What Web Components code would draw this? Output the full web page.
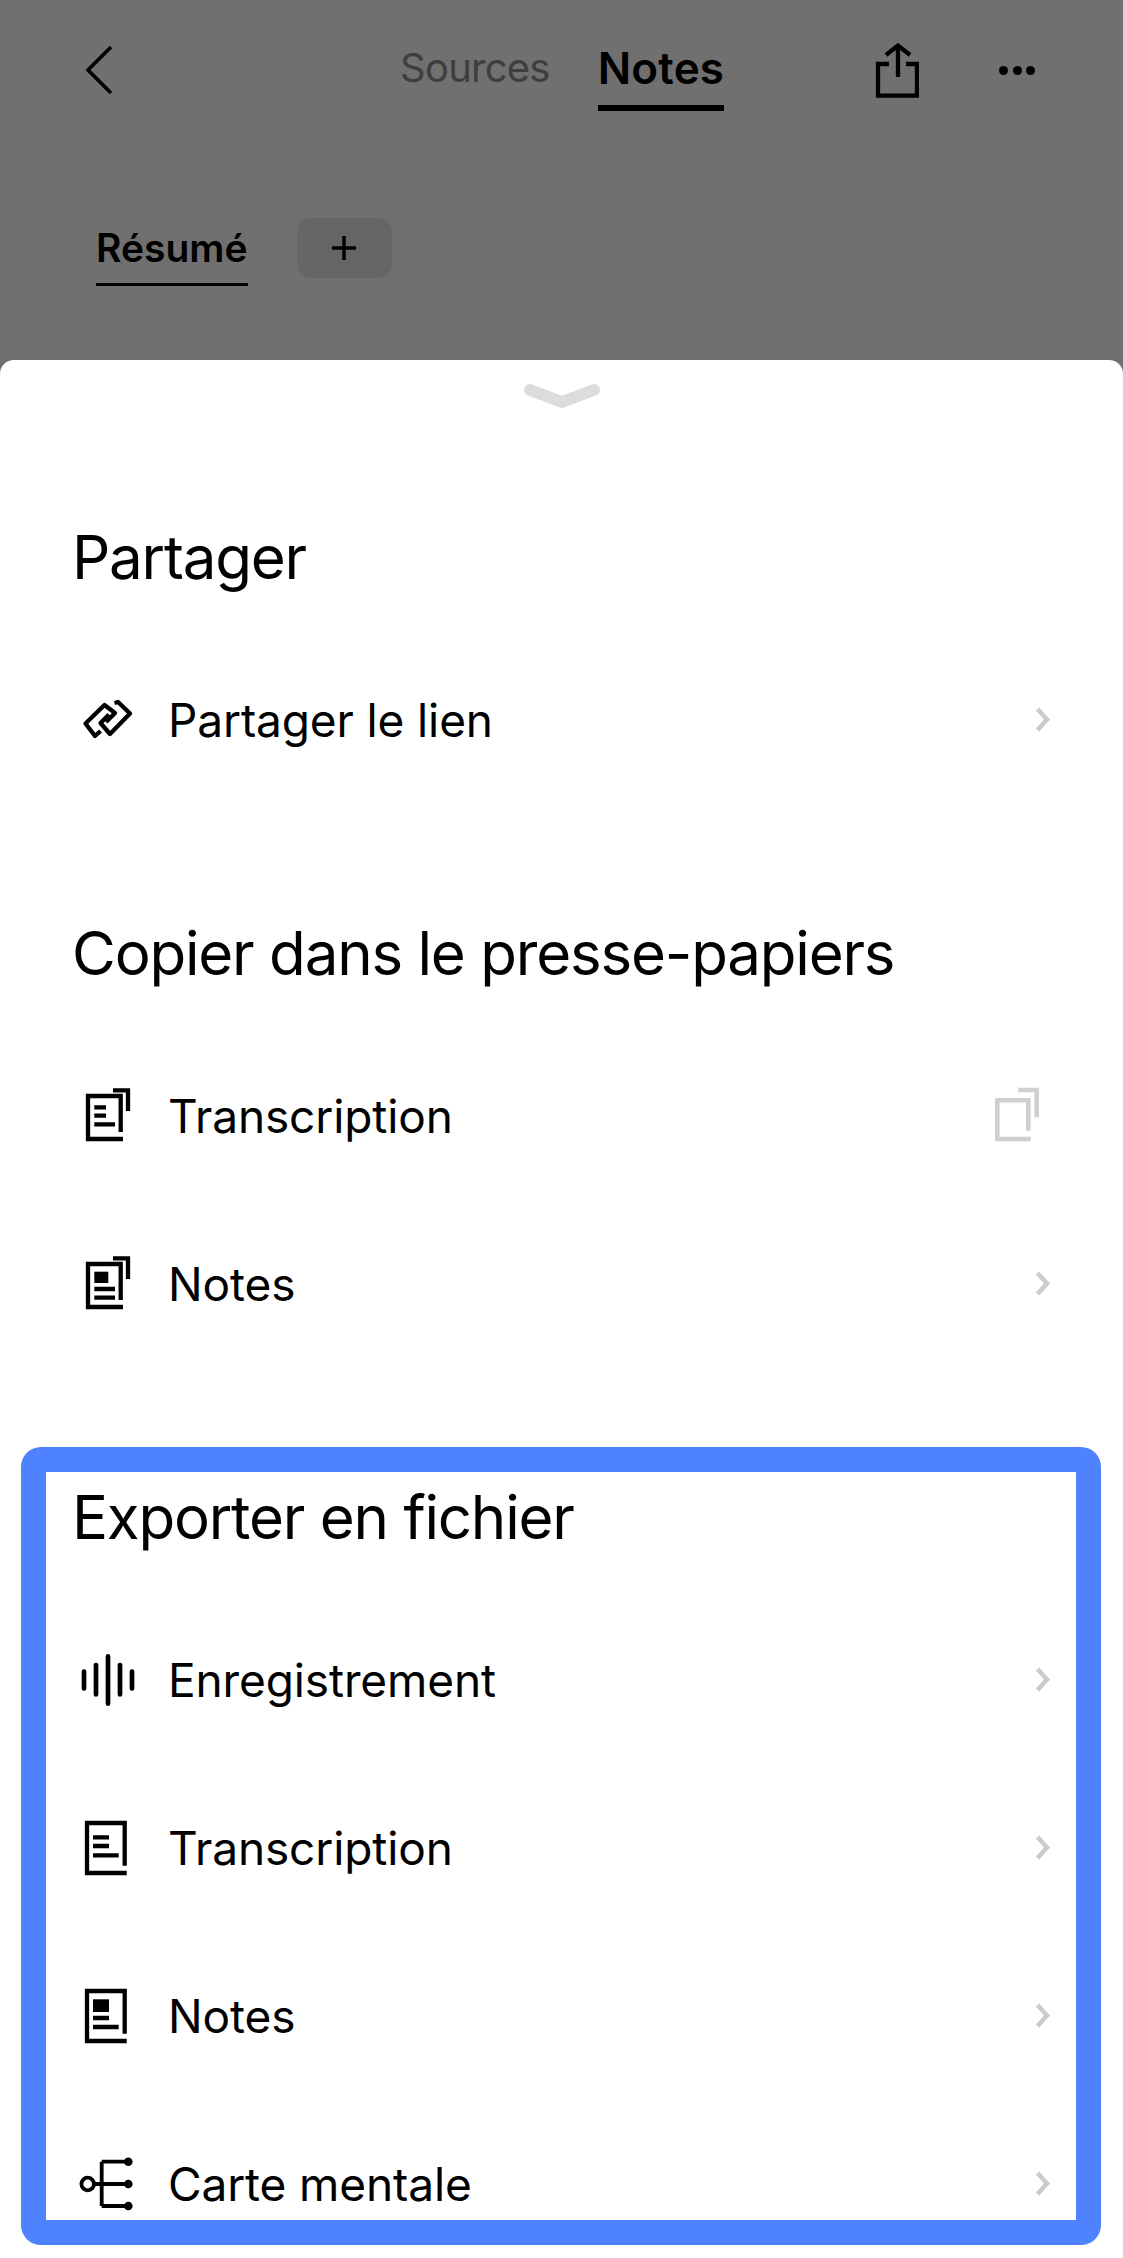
<!DOCTYPE html>
<html lang="fr">
<head>
<meta charset="utf-8">
<title>Partager</title>
<style>
  html, body { margin: 0; height: 2258px; overflow: hidden; background: #fff; }
  body { font-family: Inter, "Liberation Sans", sans-serif; color: #000; }
</style>
</head>
<body>
<notes-screen></notes-screen>

<script>
  const ICONS = {
    back: `<path d="M30 3 L7 26 L30 49" />`,
    share: `<path d="M15 21 H4 V52.600 H43 V21 H32 M24 34 V5 M12 12 L24 2.500 L36 12" />`,
    link: `<path d="M40.500 61 L35 66 L25.500 53.500 L44.500 35 L55 43 L46 52 M54.500 33 L58 32 L70 43.500 L50 64 L40.500 53 L49 44.500" />`,
    docCopy: `<path d="M60.700 66 V30 H28 V73 H63 M53 24.300 H68 V45" /><path d="M34.300 41.300 H46 M34.300 49.700 H46 M34.300 58.300 H55" />`,
    newsCopy: `<path d="M60.700 66 V30 H28 V73 H63 M53 24.300 H68 V45" /><path class="solid" d="M34.300 37.700 H48.300 V49 H34.300 Z" /><path d="M34.300 55 H55 M34.300 63.700 H55" />`,
    copy: `<path d="M75.300 64.700 V34.300 H44.300 V73 H77.700 M65.300 24 H83.700 V51.300" />`,
    wave: `<path class="round" d="M24 41.600 V58.400 M36 35 V64.400 M48 26.300 V73.700 M60 35 V64.400 M72 41.600 V58.400" />`,
    doc: `<path d="M64.700 67.700 V25 H27 V75 H66.700" /><path d="M33 39.300 H49 M33 48 H49 M33 57.300 H58.700" />`,
    news: `<path d="M64.700 67.700 V25 H27 V75 H66.700" /><path class="solid" d="M33 33.300 H49 V46 H33 Z" /><path d="M33 52 H49 M33 61 H58.700" />`,
    mindmap: `<circle cx="27.700" cy="50" r="6.300" /><path d="M34 50 H68 M41.700 27.700 H68 M41.700 72 H68 M41.700 27.700 V72" /><circle class="solid" cx="68.300" cy="27.700" r="4.300" /><circle class="solid" cx="68.300" cy="50" r="4.300" /><circle class="solid" cx="68.300" cy="72" r="4.300" />`
  };

  const VIEW_BOXES = { back: '0 0 36 52', share: '0 0 45 56' };

  class AppIcon extends HTMLElement {
    constructor() {
      super();
      this.attachShadow({ mode: 'open' });
      const name = this.getAttribute('name');
      const size = this.getAttribute('size') || '100 100';
      const [w, h] = size.split(' ');
      this.shadowRoot.innerHTML = `
        <style>
          :host { display: block; width: ${w}px; height: ${h}px; flex: none; color: #000; }
          svg { display: block; width: 100%; height: 100%; fill: none; stroke: currentColor; stroke-width: var(--sw, 4.300); stroke-linejoin: var(--join, miter); }
          .round { stroke-width: 4.700; stroke-linecap: round; }
          .solid { fill: currentColor; stroke: none; }
        </style>
        <svg viewBox="${VIEW_BOXES[name] || '0 0 100 100'}">${ICONS[name]}</svg>
      `;
    }
  }

  class TopBar extends HTMLElement {
    constructor() {
      super();
      this.attachShadow({ mode: 'open' });
      this.shadowRoot.innerHTML = `
        <style>
          :host { display: block; height: 360px; background: #707070; }
          .nav { display: flex; align-items: flex-start; padding: 44px 0 0 81px; height: 67px; }
          .tabs { display: flex; gap: 48px; margin-left: 283px; }
          .tab { font-size: 40px; letter-spacing: -0.75px; line-height: 48px; height: 67px; color: #3e3e3e; }
          .tab.active { font-size: 44px; letter-spacing: 0.2px; font-weight: 600; color: #000; box-shadow: inset 0 -6px 0 #000; }
          .share { margin-left: 150px; margin-top: -1px; --sw: 4.300; }
          .more { display: flex; gap: 4.500px; margin-left: 80px; padding-top: 22px; }
          .more i { width: 9px; height: 9px; border-radius: 50%; background: #000; }
          .sub { display: flex; align-items: flex-start; padding: 107px 0 0 96px; }
          .sub-tab { font-size: 39px; font-weight: 600; line-height: 60px; height: 65px; border-bottom: 3px solid #000; }
          .add { display: flex; align-items: center; justify-content: center; width: 95px; height: 60px; margin-left: 49px; border-radius: 14px; background: #666; }
          .add svg { width: 26px; height: 26px; stroke: #000; stroke-width: 3.500; }
        </style>
        <div class="nav">
          <app-icon name="back" size="36 52" style="--sw:3.600"></app-icon>
          <div class="tabs">
            <div class="tab">Sources</div>
            <div class="tab active">Notes</div>
          </div>
          <app-icon class="share" name="share" size="45 56"></app-icon>
          <div class="more"><i></i><i></i><i></i></div>
        </div>
        <div class="sub">
          <div class="sub-tab">Résumé</div>
          <div class="add"><svg viewBox="0 0 26 26"><path d="M13 1 V25 M1 13 H25" /></svg></div>
        </div>
      `;
    }
  }

  class SheetSection extends HTMLElement {
    constructor() {
      super();
      this.attachShadow({ mode: 'open' });
      this.shadowRoot.innerHTML = `
        <style>
          :host { display: block; margin-bottom: 70px; }
          h2 { margin: 0; height: 158px; display: flex; align-items: center; padding-left: 72px;
               font-size: 60px; font-weight: 400; letter-spacing: -1.2px; }
        </style>
        <h2>${this.getAttribute('heading')}</h2>
        <slot></slot>
      `;
    }
  }

  class SheetRow extends HTMLElement {
    constructor() {
      super();
      this.attachShadow({ mode: 'open' });
      this.shadowRoot.innerHTML = `
        <style>
          :host { display: flex; align-items: center; height: 168px; padding-left: 60px; font-size: 46px; letter-spacing: -0.12px; }
          .label { margin-left: 8px; flex: 1; }
          .end { display: flex; justify-content: flex-end; align-items: center; width: 100px; margin-right: 70px; }
          svg { width: 18px; height: 28px; fill: none; stroke: #cccccc; stroke-width: 4.600; }
        </style>
        <slot name="icon"></slot>
        <span class="label">${this.getAttribute('label')}</span>
        <div class="end">
          <slot name="end"><svg viewBox="0 0 18 28"><path d="M2.500 3 L12 13.500 L2.500 24" /></svg></slot>
        </div>
      `;
    }
  }

  class ShareSheet extends HTMLElement {
    constructor() {
      super();
      this.attachShadow({ mode: 'open' });
      this.shadowRoot.innerHTML = `
        <style>
          :host { display: block; position: relative; height: 1898px; background: #fff; border-radius: 14px 14px 0 0; overflow: hidden; }
          .handle { display: block; margin: 24px auto 0; width: 76px; height: 24px; fill: none; stroke: #dcdcdc; stroke-width: 12; stroke-linecap: round; stroke-linejoin: round; }
          .body { padding-top: 70px; }
        </style>
        <svg class="handle" viewBox="0 0 76 24"><path d="M6 6 L38 18 L70 6" /></svg>
        <div class="body"><slot></slot></div>
        <slot name="overlay"></slot>
      `;
    }
  }

  class HighlightFrame extends HTMLElement {
    constructor() {
      super();
      this.attachShadow({ mode: 'open' });
      this.shadowRoot.innerHTML = `
        <style>
          :host { position: absolute; left: 21px; top: 1087px; width: 1080px; height: 798px;
                  box-sizing: border-box; border: 25px solid #4f82ff; border-radius: 20px; pointer-events: none; }
        </style>
      `;
    }
  }

  class NotesScreen extends HTMLElement {
    constructor() {
      super();
      this.attachShadow({ mode: 'open' });
      this.shadowRoot.innerHTML = `
        <style>
          :host { display: block; height: 2258px; overflow: hidden; background: #707070; }
        </style>
        <top-bar></top-bar>
        <share-sheet>
          <sheet-section heading="Partager">
            <sheet-row label="Partager le lien"><app-icon slot="icon" name="link" style="--join:round"></app-icon></sheet-row>
          </sheet-section>
          <sheet-section heading="Copier dans le presse-papiers">
            <sheet-row label="Transcription">
              <app-icon slot="icon" name="docCopy"></app-icon>
              <app-icon slot="end" name="copy" style="color:#d0d0d0;--sw:4.600"></app-icon>
            </sheet-row>
            <sheet-row label="Notes"><app-icon slot="icon" name="newsCopy"></app-icon></sheet-row>
          </sheet-section>
          <sheet-section heading="Exporter en fichier">
            <sheet-row label="Enregistrement"><app-icon slot="icon" name="wave"></app-icon></sheet-row>
            <sheet-row label="Transcription"><app-icon slot="icon" name="doc"></app-icon></sheet-row>
            <sheet-row label="Notes"><app-icon slot="icon" name="news"></app-icon></sheet-row>
            <sheet-row label="Carte mentale"><app-icon slot="icon" name="mindmap" style="--sw:3.800"></app-icon></sheet-row>
          </sheet-section>
          <highlight-frame slot="overlay"></highlight-frame>
        </share-sheet>
      `;
    }
  }

  customElements.define('app-icon', AppIcon);
  customElements.define('top-bar', TopBar);
  customElements.define('sheet-section', SheetSection);
  customElements.define('sheet-row', SheetRow);
  customElements.define('share-sheet', ShareSheet);
  customElements.define('highlight-frame', HighlightFrame);
  customElements.define('notes-screen', NotesScreen);
</script>
</body>
</html>
